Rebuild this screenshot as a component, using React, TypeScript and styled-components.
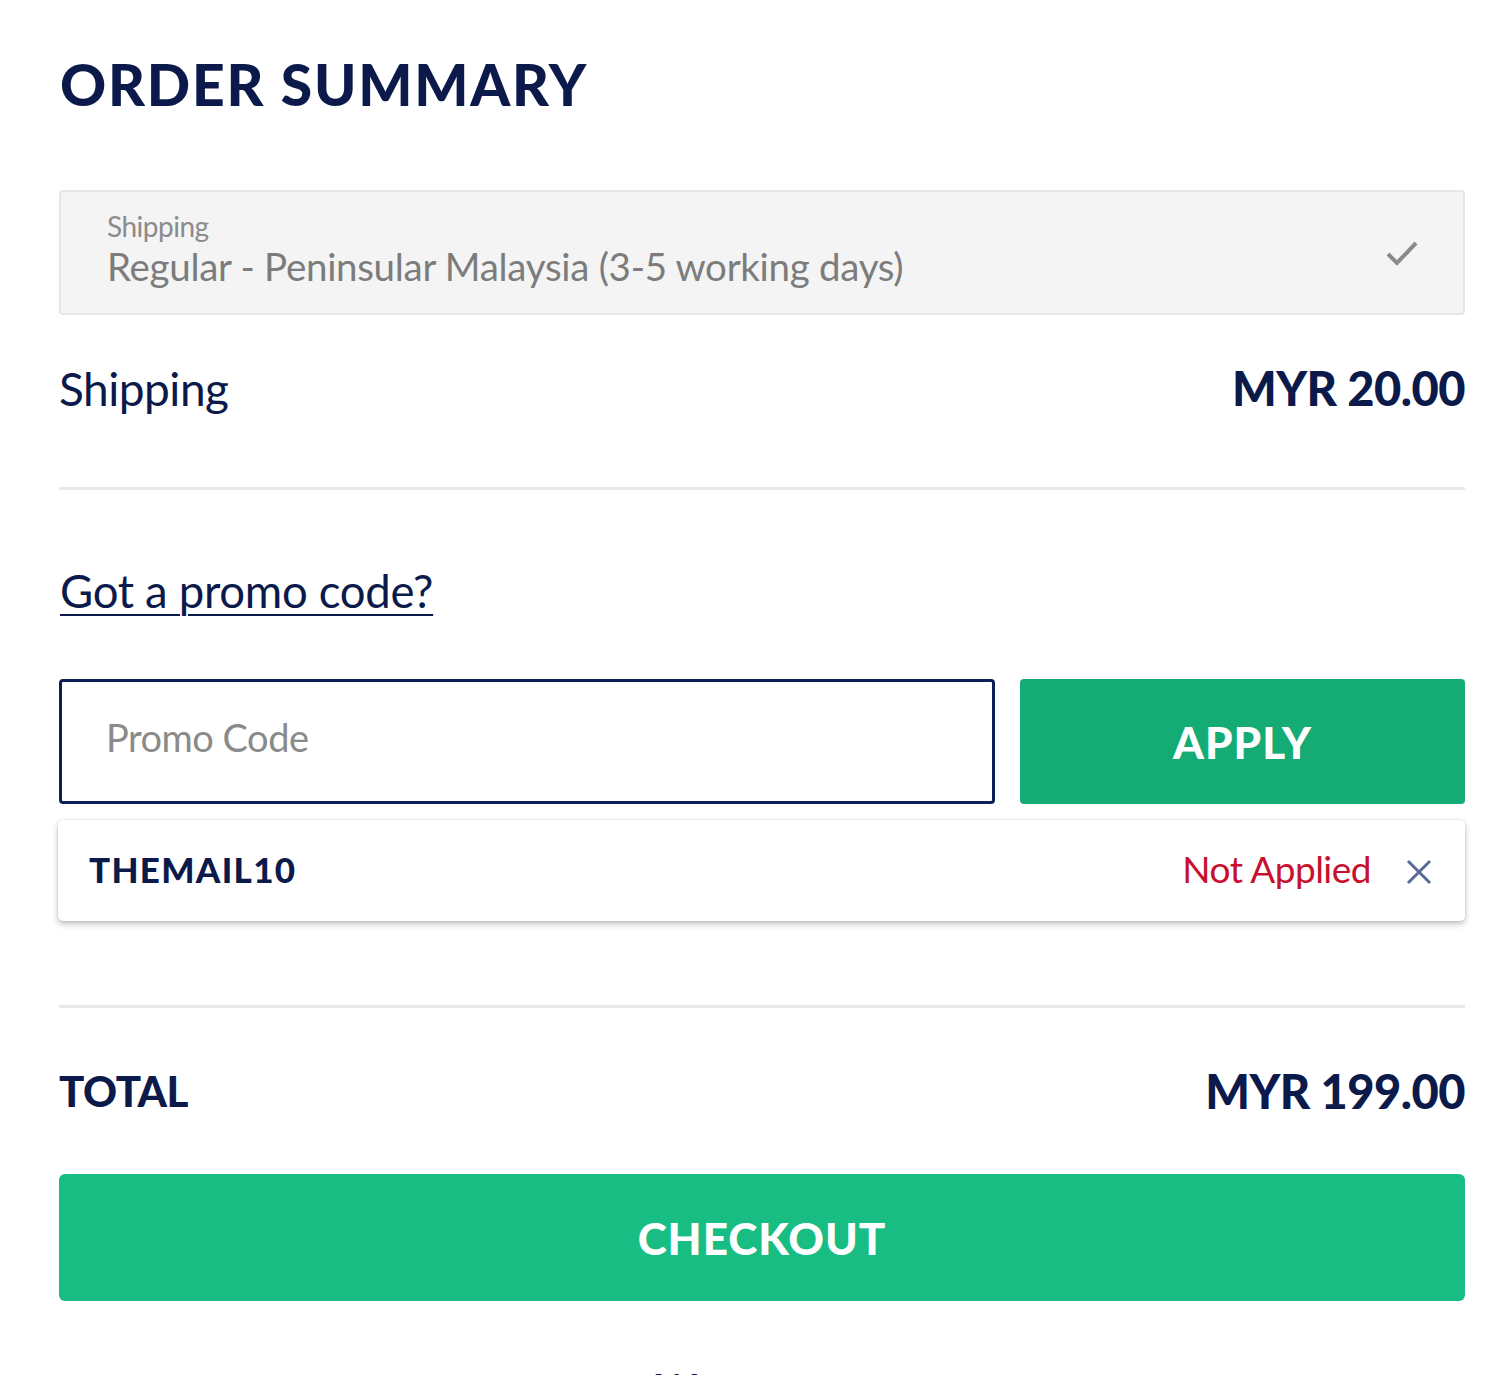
import React from "react";
import styled, { createGlobalStyle } from "styled-components";

const navy = "#0b1a4a";

const Global = createGlobalStyle`
  html, body { margin: 0; padding: 0; background: #fff; }
  body { font-family: "Futura", "Lato", "Liberation Sans", sans-serif; color: ${navy}; }
  * { box-sizing: border-box; }
`;

const Page = styled.div`
  width: 1500px;
  height: 1375px;
  overflow: hidden;
  padding: 52px 35px 0 59px;
`;

const Title = styled.h1`
  margin: 0 0 74px 1px;
  font-size: 57px;
  line-height: 64px;
  font-weight: 900;
  letter-spacing: 1.8px;
  color: ${navy};
`;

const SelectBox = styled.div`
  height: 125px;
  background: #f4f4f4;
  border: 2px solid #e6e6e6;
  border-radius: 4px;
  display: flex;
  align-items: center;
  justify-content: space-between;
  padding: 0 44px 0 46px;
`;

const SelectText = styled.div`
  display: flex;
  flex-direction: column;
  margin-top: -6px;
`;

const SelectLabel = styled.span`
  font-size: 28px;
  line-height: 32px;
  color: #8b8b8b;
  letter-spacing: -0.5px;
`;

const SelectValue = styled.span`
  font-size: 38.5px;
  line-height: 48px;
  color: #7c7c7c;
  letter-spacing: -0.3px;
`;

const Row = styled.div<{ $h: number; $lift: number }>`
  display: flex;
  justify-content: space-between;
  align-items: center;
  height: ${(p) => p.$h}px;
  padding-bottom: ${(p) => p.$lift}px;
`;

const RowLabel = styled.span<{ $bold?: boolean }>`
  font-size: ${(p) => (p.$bold ? 42 : 46)}px;
  font-weight: ${(p) => (p.$bold ? 900 : 400)};
  letter-spacing: -0.5px;
  color: ${navy};
`;

const Amount = styled.span`
  font-size: 47px;
  font-weight: 900;
  color: ${navy};
  letter-spacing: -0.5px;
`;

const Divider = styled.hr`
  margin: 0;
  border: 0;
  height: 3px;
  background: #e8e8e8;
`;

const PromoLink = styled.a`
  display: block;
  margin: 71px 0 0 1px;
  font-size: 45.5px;
  line-height: 60px;
  color: ${navy};
  text-decoration: underline;
  text-decoration-thickness: 2px;
  text-underline-offset: 6px;
  letter-spacing: -0.3px;
`;

const PromoRow = styled.div`
  display: flex;
  gap: 25px;
  margin-top: 58px;
  height: 125px;
`;

const PromoInput = styled.input`
  flex: 0 0 936px;
  height: 125px;
  border: 3px solid #0f1f55;
  border-radius: 4px;
  padding: 0 0 10px 44px;
  font-family: inherit;
  font-size: 38px;
  color: ${navy};
  outline: none;
  &::placeholder { color: #8a8a8a; letter-spacing: -0.5px; }
`;

const GreenButton = styled.button<{ $tone: string; $radius: number }>`
  flex: 1;
  width: 100%;
  border: 0;
  border-radius: ${(p) => p.$radius}px;
  background: ${(p) => p.$tone};
  color: #fff;
  font-family: inherit;
  font-size: 44px;
  font-weight: 900;
  letter-spacing: 1px;
  cursor: pointer;
`;

const Tag = styled.div`
  margin-top: 16px;
  margin-left: -1px;
  height: 101px;
  background: #fff;
  border-radius: 5px;
  box-shadow: 0 3px 6px rgba(0, 0, 0, 0.25), 0 0 2px rgba(0, 0, 0, 0.12);
  display: flex;
  align-items: center;
  padding: 0 32px 4px 31px;
  gap: 34px;
`;

const Code = styled.span`
  flex: 1;
  font-size: 35px;
  font-weight: 900;
  color: ${navy};
  letter-spacing: 1.3px;
`;

const Status = styled.span`
  font-size: 37px;
  color: #c8102e;
  letter-spacing: -0.5px;
`;

const CloseIcon = styled.svg`
  width: 28px;
  height: 28px;
  margin-top: 6px;
`;

const Spacer = styled.div`
  height: 84px;
`;

const CheckoutWrap = styled.div`
  height: 127px;
  display: flex;
`;

const Accept = styled.div`
  margin-top: 63px;
  text-align: center;
  font-size: 40px;
  font-weight: 700;
  color: ${navy};
  margin-left: -26px;
`;

export default function App() {
  return (
    <>
      <Global />
      <Page>
        <Title>ORDER SUMMARY</Title>
        <SelectBox>
          <SelectText>
            <SelectLabel>Shipping</SelectLabel>
            <SelectValue>Regular - Peninsular Malaysia (3-5 working days)</SelectValue>
          </SelectText>
          <svg width="34" height="28" viewBox="0 0 34 28">
            <path d="M3 15 L12 24 L31 4" fill="none" stroke="#8a8a8a" strokeWidth="4" />
          </svg>
        </SelectBox>
        <Row $h={172} $lift={26}>
          <RowLabel>Shipping</RowLabel>
          <Amount>MYR 20.00</Amount>
        </Row>
        <Divider />
        <PromoLink href="#">Got a promo code?</PromoLink>
        <PromoRow>
          <PromoInput placeholder="Promo Code" />
          <GreenButton $tone="#15ab75" $radius={4}>APPLY</GreenButton>
        </PromoRow>
        <Tag>
          <Code>THEMAIL10</Code>
          <Status>Not Applied</Status>
          <CloseIcon viewBox="0 0 28 28">
            <path d="M3 3 L25 25 M25 3 L3 25" stroke="#5b6a9c" strokeWidth="3" fill="none" />
          </CloseIcon>
        </Tag>
        <Spacer />
        <Divider />
        <Row $h={166} $lift={0}>
          <RowLabel $bold>TOTAL</RowLabel>
          <Amount>MYR 199.00</Amount>
        </Row>
        <CheckoutWrap>
          <GreenButton $tone="#17bd82" $radius={6}>CHECKOUT</GreenButton>
        </CheckoutWrap>
        <Accept>We accept</Accept>
      </Page>
    </>
  );
}
